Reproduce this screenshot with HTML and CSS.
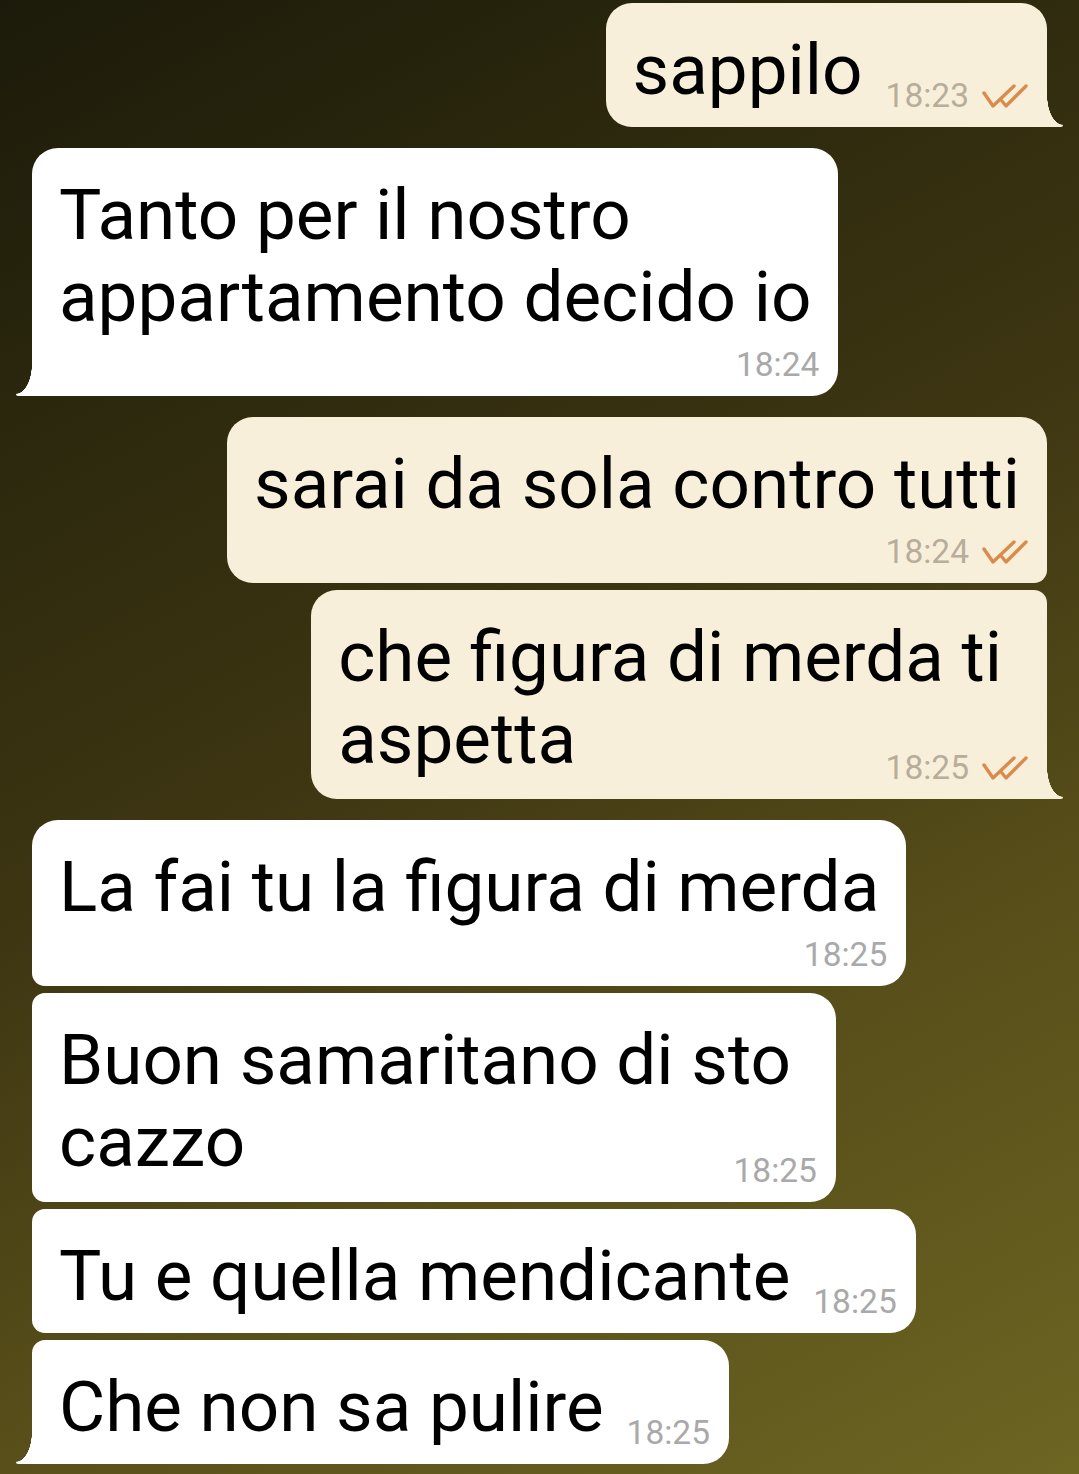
FILE: index.html
```html
<!DOCTYPE html>
<html lang="it">
<head>
    <meta charset="UTF-8">
    <meta name="viewport" content="width=device-width, initial-scale=1.0">
    <title>Chat</title>
    <link rel="stylesheet" href="styles.css">
</head>
<body>
    <div class="chat">
        <!-- sent -->
        <div class="bubble out tail inline">
            <div class="text">sappilo</div>
            <div class="meta">18:23
                <svg class="ticks" viewBox="0 0 46 24"><path d="M2 9 L11 22 L32 2"/><path d="M20 17 L24 22 L44 2"/></svg>
            </div>
        </div>

        <!-- received -->
        <div class="bubble in tail below gap">
            <div class="text">Tanto per il nostro<br>appartamento decido io</div>
            <div class="meta">18:24</div>
        </div>

        <div class="bubble out first below gap">
            <div class="text">sarai da sola contro tutti</div>
            <div class="meta">18:24
                <svg class="ticks" viewBox="0 0 46 24"><path d="M2 9 L11 22 L32 2"/><path d="M20 17 L24 22 L44 2"/></svg>
            </div>
        </div>
        <div class="bubble out last tail overlap">
            <div class="text">che figura di merda ti<br>aspetta</div>
            <div class="meta">18:25
                <svg class="ticks" viewBox="0 0 46 24"><path d="M2 9 L11 22 L32 2"/><path d="M20 17 L24 22 L44 2"/></svg>
            </div>
        </div>

        <div class="bubble in first below gap">
            <div class="text">La fai tu la figura di merda</div>
            <div class="meta">18:25</div>
        </div>
        <div class="bubble in mid overlap">
            <div class="text">Buon samaritano di sto<br>cazzo</div>
            <div class="meta">18:25</div>
        </div>
        <div class="bubble in mid inline">
            <div class="text">Tu e quella mendicante</div>
            <div class="meta">18:25</div>
        </div>
        <div class="bubble in last tail inline">
            <div class="text">Che non sa pulire</div>
            <div class="meta">18:25</div>
        </div>
    </div>
</body>
</html>
```

FILE: styles.css
```css
* {
    margin: 0;
    padding: 0;
    box-sizing: border-box;
}

body {
    width: 1079px;
    height: 1474px;
    overflow: hidden;
    font-family: Roboto, "Noto Sans", sans-serif;
    background: linear-gradient(152deg, #1c1a0a 0%, #2e2a0e 25%, #3d3512 45%, #554c19 68%, #6d6522 100%);
}

.chat {
    display: flex;
    flex-direction: column;
    padding: 3px 32px 0;
    gap: 7px;
}

/* Bubbles */
.bubble {
    position: relative;
    display: grid;
    padding: 26px 27px 12px 27px;
    border-radius: 26px;
    white-space: nowrap;
}

.bubble.gap {
    margin-top: 14px;
}

.bubble.in {
    align-self: flex-start;
    background-color: #ffffff;
}

.bubble.out {
    align-self: flex-end;
    background-color: #f8efdb;
}

.text {
    font-size: 71px;
    line-height: 82px;
    color: #000;
}

.meta {
    display: flex;
    align-items: center;
    gap: 13px;
    margin-right: -8px;
    font-size: 33.5px;
    line-height: 38px;
    color: #a9a9a9;
}

.out .meta {
    color: #b8ad9b;
}

.ticks {
    width: 46px;
    height: 24px;
    fill: none;
    stroke: #d98b4c;
    stroke-width: 3.4;
    stroke-linecap: round;
    stroke-linejoin: round;
}

/* Time placement */
.inline {
    grid-template-columns: auto auto;
    column-gap: 23px;
}

.inline .text {
    margin-bottom: 4px;
}

.inline .meta {
    align-self: end;
}

.below .meta {
    justify-self: end;
    margin-top: 8px;
}

.overlap .text,
.overlap .meta {
    grid-area: 1 / 1;
}

.overlap .text {
    padding-right: 18px;
    margin-bottom: 7px;
}

.overlap .meta {
    justify-self: end;
    align-self: end;
}

/* Grouped corners */
.in.first { border-bottom-left-radius: 13px; }
.in.mid { border-top-left-radius: 13px; border-bottom-left-radius: 13px; }
.in.last { border-top-left-radius: 13px; }
.out.first { border-bottom-right-radius: 13px; }
.out.last { border-top-right-radius: 13px; }

/* Tails */
.in.tail { border-bottom-left-radius: 0; }
.out.tail { border-bottom-right-radius: 0; }

.in.tail::before,
.out.tail::after {
    content: "";
    position: absolute;
    bottom: 0;
    width: 16px;
    height: 32px;
}

.in.tail::before {
    left: -16px;
    background: radial-gradient(ellipse 16px 30px at 0 0, transparent 98%, #ffffff 100%);
    border-bottom-left-radius: 2px;
}

.out.tail::after {
    right: -16px;
    background: radial-gradient(ellipse 16px 30px at 100% 0, transparent 98%, #f8efdb 100%);
    border-bottom-right-radius: 2px;
}
```
